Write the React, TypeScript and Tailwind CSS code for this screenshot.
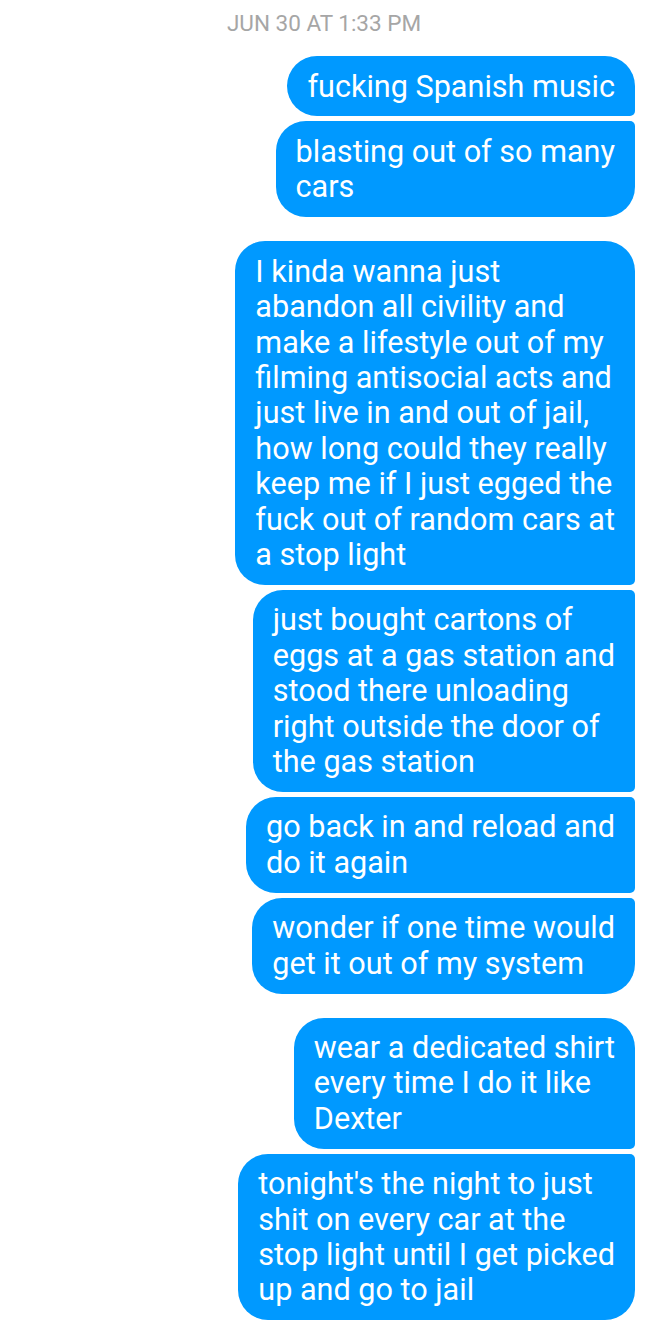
type Burbuja = {
  lineas: string[];
  esquinas: string;
};

type Grupo = Burbuja[];

const grupos: Grupo[] = [
  [
    { lineas: ["fucking Spanish music"], esquinas: "rounded-[30px] rounded-br-[5px]" },
    { lineas: ["blasting out of so many", "cars"], esquinas: "rounded-[30px] rounded-tr-[5px]" },
  ],
  [
    {
      lineas: [
        "I kinda wanna just",
        "abandon all civility and",
        "make a lifestyle out of my",
        "filming antisocial acts and",
        "just live in and out of jail,",
        "how long could they really",
        "keep me if I just egged the",
        "fuck out of random cars at",
        "a stop light",
      ],
      esquinas: "rounded-[30px] rounded-br-[5px]",
    },
    {
      lineas: [
        "just bought cartons of",
        "eggs at a gas station and",
        "stood there unloading",
        "right outside the door of",
        "the gas station",
      ],
      esquinas: "rounded-[30px] rounded-r-[5px]",
    },
    { lineas: ["go back in and reload and", "do it again"], esquinas: "rounded-[30px] rounded-r-[5px]" },
    { lineas: ["wonder if one time would", "get it out of my system"], esquinas: "rounded-[30px] rounded-tr-[5px]" },
  ],
  [
    {
      lineas: ["wear a dedicated shirt", "every time I do it like", "Dexter"],
      esquinas: "rounded-[30px] rounded-br-[5px]",
    },
    {
      lineas: [
        "tonight's the night to just",
        "shit on every car at the",
        "stop light until I get picked",
        "up and go to jail",
      ],
      esquinas: "rounded-[30px] rounded-tr-[5px]",
    },
  ],
];

function Mensaje({ burbuja }: { burbuja: Burbuja }) {
  return (
    <div
      className={`bg-[#0099ff] text-white px-5 py-[12.5px] text-[30.6px] leading-[35.4px] whitespace-nowrap ${burbuja.esquinas}`}
    >
      {burbuja.lineas.map((linea, i) => (
        <div key={i}>{linea}</div>
      ))}
    </div>
  );
}

export default function App() {
  return (
    <main
      className="min-h-screen bg-white pt-[9px] pr-[13px]"
      style={{ fontFamily: "Roboto, 'Noto Sans', sans-serif" }}
    >
      <div className="text-center text-[22.5px] leading-[28px] text-[#a6a6a6] pl-[13px]">
        JUN 30 AT 1:33 PM
      </div>

      <div className="flex flex-col gap-[24px] mt-[19px]">
        {grupos.map((grupo, g) => (
          <div key={g} className="flex flex-col items-end gap-[5px]">
            {grupo.map((burbuja, i) => (
              <Mensaje key={i} burbuja={burbuja} />
            ))}
          </div>
        ))}
      </div>
    </main>
  );
}
